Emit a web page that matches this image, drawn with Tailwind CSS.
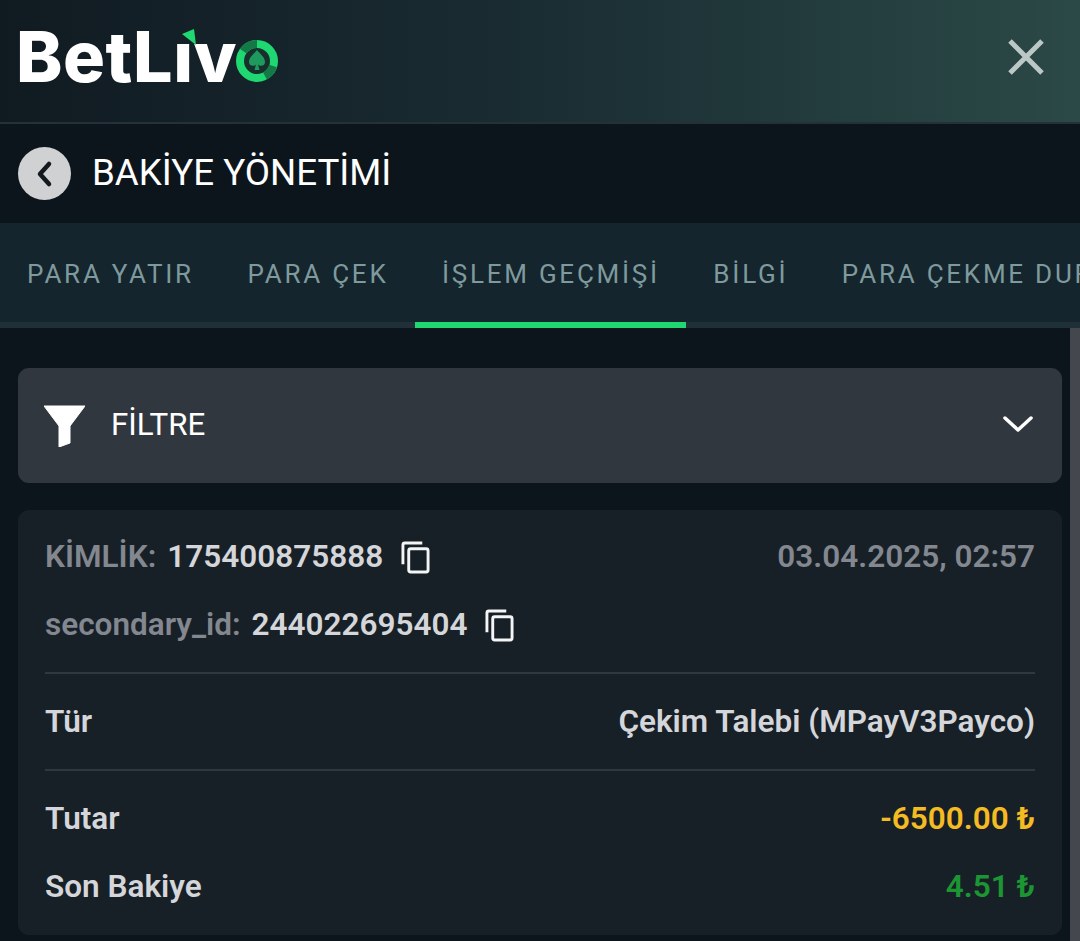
<!DOCTYPE html>
<html lang="tr">
<head>
  <meta charset="UTF-8" />
  <meta name="viewport" content="width=device-width, initial-scale=1.0"/>
  <title>Bakiye Yönetimi</title>
  <script src="https://cdn.jsdelivr.net/npm/@tailwindcss/browser@4"></script>
</head>
<body class="bg-[#0d151c] font-['Roboto',sans-serif] overflow-hidden">
<div class="w-[1080px] h-[941px] flex flex-col overflow-hidden">

  <!-- logo bar -->
  <header class="h-[124px] shrink-0 flex items-center justify-between pl-[16px] pr-[36px] bg-gradient-to-r from-[#101a21] via-[#1a2d33] to-[#2b4946] border-b-2 border-[#243238]">
    <div class="relative flex items-center h-[60px] -mt-[8px]">
      <span class="font-['Inter',sans-serif] font-extrabold text-[70px] leading-none tracking-[0.500px] text-white">BetLıv</span>
      <svg class="absolute left-[166px] top-[2px]" width="15" height="17" viewBox="0 0 15 17"><path d="M12 0 L0 5 L14 16 Z" fill="#1fd872"/></svg>
      <svg class="-ml-[2px] mt-[8px]" width="44" height="44" viewBox="0 0 44 44">
        <circle cx="22" cy="22" r="14" fill="#17302c"/>
        <circle cx="22" cy="22" r="17" fill="none" stroke="#1fd872" stroke-width="8"/>
        <path d="M22 5 A17 17 0 0 0 8 12" fill="none" stroke="#137a47" stroke-width="8"/>
        <path d="M30 37 A17 17 0 0 0 38 27" fill="none" stroke="#137a47" stroke-width="8"/>
        <path d="M22 11 C25 15 30 18 30 23 C30 27 25 28 23 25.500 L24.500 31 L19.500 31 L21 25.500 C19 28 14 27 14 23 C14 18 19 15 22 11 Z" fill="#1f9a5e"/>
      </svg>
    </div>
    <svg width="36" height="36" viewBox="0 0 36 36" class="-mt-[8px]"><path d="M2 2 L34 34 M34 2 L2 34" stroke="#bcc8c6" stroke-width="5"/></svg>
  </header>

  <!-- title -->
  <div class="h-[99px] shrink-0 flex items-center gap-[21px] pl-[18px]">
    <span class="w-[53px] h-[53px] rounded-full bg-[#cfd1d3] flex items-center justify-center">
      <svg width="20" height="28" viewBox="0 0 20 28"><path d="M14 4 L5 14 L14 24" fill="none" stroke="#14191e" stroke-width="4.500" stroke-linecap="round" stroke-linejoin="round"/></svg>
    </span>
    <h1 class="text-[36.700px] leading-none text-white">BAKİYE YÖNETİMİ</h1>
  </div>

  <!-- tabs -->
  <nav class="h-[105px] shrink-0 flex bg-[#14252d] shadow-[inset_0_-6px_0_#1f3038] text-[26px] tracking-[2.750px] text-[#7f9a9d] whitespace-nowrap overflow-hidden">
    <a class="pl-[27px] pr-[26.500px] pb-[3px] flex items-center">PARA YATIR</a>
    <a class="pl-[27px] pr-[26.500px] pb-[3px] flex items-center">PARA ÇEK</a>
    <a class="relative pl-[27px] pr-[26.500px] pb-[3px] flex items-center">İŞLEM GEÇMİŞİ<span class="absolute left-0 right-0 bottom-0 h-[6px] bg-[#1fd872]"></span></a>
    <a class="pl-[27px] pr-[26.500px] pb-[3px] flex items-center">BİLGİ</a>
    <a class="pl-[27px] pr-[26.500px] pb-[3px] flex items-center">PARA ÇEKME DURUMU</a>
  </nav>

  <div class="flex flex-1 min-h-0">
    <main class="flex-1 pl-[18px] pr-[8px] pt-[40px]">
      <!-- filter -->
      <div class="h-[115px] rounded-[11px] bg-[#31373f] flex items-center pl-[26px] pr-[28px]">
        <svg width="41" height="42" viewBox="0 0 41 42"><path d="M0 1 L41 1 L26 21 L26 38 L15 42 L15 21 Z" fill="#fff" stroke="#fff" stroke-width="1" stroke-linejoin="round"/></svg>
        <span class="ml-[26px] text-[31.300px] leading-none text-white -mt-[1px]">FİLTRE</span>
        <svg class="ml-auto -mt-[3px]" width="32" height="20" viewBox="0 0 32 20"><path d="M3 4 L16 16 L29 4" fill="none" stroke="#fff" stroke-width="3.500" stroke-linecap="round" stroke-linejoin="round"/></svg>
      </div>

      <!-- transaction -->
      <article class="mt-[27px] h-[425px] rounded-[11px] bg-[#182027] px-[27px] text-[31.500px] leading-none font-semibold text-[#d4d6d9]">
        <div class="h-[92px] flex items-center justify-between pt-[2px]">
          <div class="flex items-center">
            <span class="text-[#83878f]">KİMLİK:</span>
            <span class="ml-[11px]">175400875888</span>
            <svg class="ml-[18px]" width="29" height="33" viewBox="0 0 30 34"><path d="M22 2 H4 A2 2 0 0 0 2 4 V24 M10 8 H26 A2 2 0 0 1 28 10 V30 A2 2 0 0 1 26 32 H10 A2 2 0 0 1 8 30 V10 A2 2 0 0 1 10 8 Z" fill="none" stroke="#f4f5f6" stroke-width="3"/></svg>
          </div>
          <span class="text-[#83878f]">03.04.2025, 02:57</span>
        </div>
        <div class="h-[46px] flex items-center">
          <span class="text-[#83878f]">secondary_id:</span>
          <span class="ml-[11px]">244022695404</span>
          <svg class="ml-[18px]" width="29" height="33" viewBox="0 0 30 34"><path d="M22 2 H4 A2 2 0 0 0 2 4 V24 M10 8 H26 A2 2 0 0 1 28 10 V30 A2 2 0 0 1 26 32 H10 A2 2 0 0 1 8 30 V10 A2 2 0 0 1 10 8 Z" fill="none" stroke="#f4f5f6" stroke-width="3"/></svg>
        </div>
        <div class="mt-[24px] h-[99px] flex items-center justify-between border-y-2 border-[#30373e]">
          <span>Tür</span>
          <span>Çekim Talebi (MPayV3Payco)</span>
        </div>
        <div class="h-[96px] flex items-center justify-between">
          <span>Tutar</span>
          <span class="text-[#f5bb22]">-6500.00 ₺</span>
        </div>
        <div class="h-[40px] flex items-center justify-between">
          <span>Son Bakiye</span>
          <span class="text-[#1c9632]">4.51 ₺</span>
        </div>
      </article>
    </main>
    <!-- scrollbar -->
    <div class="w-[10px] shrink-0 bg-[#44484e]"></div>
  </div>
</div>
</body>
</html>
